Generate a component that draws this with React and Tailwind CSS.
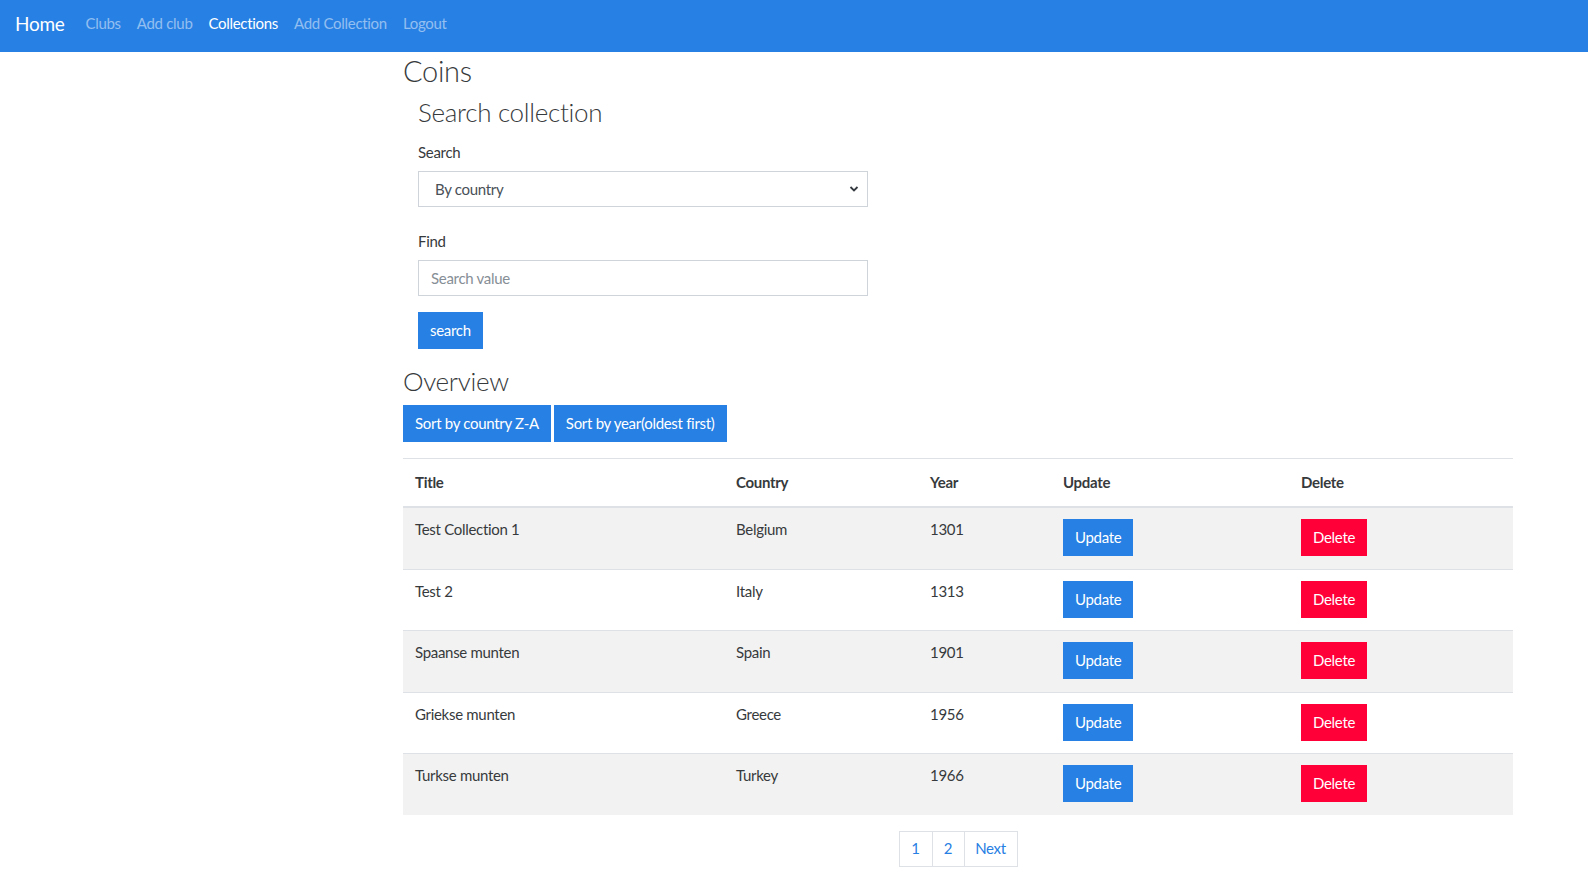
import React from 'react';

const rows = [
  { title: 'Test Collection 1', country: 'Belgium', year: '1301' },
  { title: 'Test 2', country: 'Italy', year: '1313' },
  { title: 'Spaanse munten', country: 'Spain', year: '1901' },
  { title: 'Griekse munten', country: 'Greece', year: '1956' },
  { title: 'Turkse munten', country: 'Turkey', year: '1966' },
];

const font = { fontFamily: 'Lato, "Open Sans", sans-serif' };

function Navbar() {
  return (
    <nav className="h-[52px] bg-[#2780e3] flex items-center px-[15px] pb-[5px]">
      <span className="text-[19px] text-white mr-[13px] leading-none tracking-[-0.3px]">Home</span>
      <div className="flex items-center text-[15px] leading-none tracking-[-0.3px]">
        <span className="px-2 text-white/50">Clubs</span>
        <span className="px-2 text-white/50">Add club</span>
        <span className="px-2 text-white">Collections</span>
        <span className="px-2 text-white/50">Add Collection</span>
        <span className="px-2 text-white/50">Logout</span>
      </div>
    </nav>
  );
}

function SearchForm() {
  return (
    <div className="px-[15px] w-[480px]">
      <h3 className="text-[26px] font-light leading-[34px] mt-[5px] mb-[11px] tracking-[-0.3px]">Search collection</h3>
      <label className="block leading-6 mb-[7px]">Search</label>
      <div className="relative">
        <select className="appearance-none w-full h-[36px] border border-[#ced4da] bg-white pl-4 pr-8 text-[15px] tracking-[-0.3px] text-[#495057] outline-none">
          <option>By country</option>
        </select>
        <svg className="absolute right-[9px] top-[14px] pointer-events-none" width="10" height="8" viewBox="0 0 10 8">
          <path d="M1.5 2l3.5 3.5L8.5 2" fill="none" stroke="#343a40" strokeWidth="1.8" />
        </svg>
      </div>
      <label className="block leading-6 mt-[22px] mb-[7px]">Find</label>
      <input
        className="w-full h-[36px] border border-[#ced4da] px-3 text-[15px] tracking-[-0.3px] placeholder-[#868e96] outline-none"
        placeholder="Search value"
      />
      <button className="mt-4 h-[37px] px-3 bg-[#2780e3] text-white">search</button>
    </div>
  );
}

function CoinTable() {
  return (
    <table className="w-full border-collapse text-left">
      <thead>
        <tr className="border-t border-[#dee2e6] border-b-2">
          <th className="w-[321px] px-3 pt-[11px] pb-[12px] leading-6 font-bold">Title</th>
          <th className="w-[194px] px-3 pt-[11px] pb-[12px] leading-6 font-bold">Country</th>
          <th className="w-[133px] px-3 pt-[11px] pb-[12px] leading-6 font-bold">Year</th>
          <th className="w-[238px] px-3 pt-[11px] pb-[12px] leading-6 font-bold">Update</th>
          <th className="px-3 pt-[11px] pb-[12px] leading-6 font-bold">Delete</th>
        </tr>
      </thead>
      <tbody>
        {rows.map((r, i) => (
          <tr key={r.title} className={`border-t border-[#dee2e6] align-top ${i % 2 === 0 ? 'bg-[#f2f2f2]' : 'bg-white'}`}>
            <td className="px-3 pt-[9px] pb-[12.5px] leading-6">{r.title}</td>
            <td className="px-3 pt-[9px] pb-[12.5px] leading-6">{r.country}</td>
            <td className="px-3 pt-[9px] pb-[12.5px] leading-6">{r.year}</td>
            <td className="px-3 pt-[11px] pb-[12.5px]">
              <button className="h-[37px] px-3 bg-[#2780e3] text-white">Update</button>
            </td>
            <td className="px-3 pt-[11px] pb-[12.5px]">
              <button className="h-[37px] px-3 bg-[#ff0039] text-white">Delete</button>
            </td>
          </tr>
        ))}
      </tbody>
    </table>
  );
}

function Pagination() {
  return (
    <div className="flex justify-center mt-[16px]">
      <div className="flex h-[36px] text-[#2780e3]">
        <span className="w-[34px] border border-[#dee2e6] flex items-center justify-center">1</span>
        <span className="w-[32px] border border-l-0 border-[#dee2e6] flex items-center justify-center">2</span>
        <span className="w-[53px] border border-l-0 border-[#dee2e6] flex items-center justify-center">Next</span>
      </div>
    </div>
  );
}

export default function App() {
  return (
    <div className="min-h-screen bg-white text-[#373a3c] text-[15px] tracking-[-0.3px]" style={font}>
      <Navbar />
      <main className="ml-[403px] w-[1110px]">
        <h2 className="text-[29px] font-light leading-[38px] mb-0 tracking-[-0.3px]">Coins</h2>
        <SearchForm />
        <h3 className="text-[26px] font-light leading-[34px] mt-[15px] mb-[7px] tracking-[-0.3px]">Overview</h3>
        <div className="flex gap-[3px] mb-4">
          <button className="h-[37px] px-3 bg-[#2780e3] text-white">Sort by country Z-A</button>
          <button className="h-[37px] px-3 bg-[#2780e3] text-white">Sort by year(oldest first)</button>
        </div>
        <CoinTable />
        <Pagination />
      </main>
    </div>
  );
}
